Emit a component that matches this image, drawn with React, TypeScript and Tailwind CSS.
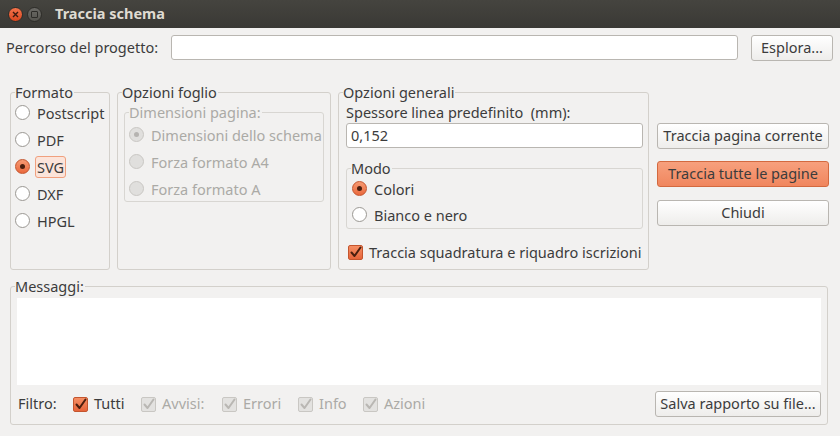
import React from "react";

const txt = "text-[#3c3c3c]";

function Radio({ label, checked = false, disabled = false, focus = false, dot = false }: { label: string; checked?: boolean; disabled?: boolean; focus?: boolean; dot?: boolean }) {
  let circle = "border-[#9b9893] bg-white";
  if (checked) circle = "border-[#c4552e] bg-gradient-to-b from-[#f79a72] to-[#e9683c]";
  if (disabled) circle = "border-[#c9c7c3] bg-[#e0dfdd]";
  return (
    <div className="flex items-center h-[27px]">
      <div className={`w-[15px] h-[15px] rounded-full border flex items-center justify-center shrink-0 ${circle}`}>
        {checked && <div className="w-[5px] h-[5px] rounded-full bg-[#4a1e0e]" />}
        {dot && <div className="w-[5px] h-[5px] rounded-full bg-[#b5b3b0]" />}
      </div>
      <span
        className={`ml-[5px] px-[1px] leading-[20px] rounded-[3px] border whitespace-nowrap ${focus ? "border-[#f0a07e] bg-[#fbe4da]" : "border-transparent"} ${disabled ? "text-[#abaaa6]" : txt}`}
      >
        {label}
      </span>
    </div>
  );
}

function Check({ checked = true, disabled = false }: { checked?: boolean; disabled?: boolean }) {
  const box = disabled ? "border-[#c9c7c3] bg-[#e3e2e0]" : "border-[#c4552e] bg-gradient-to-b from-[#f58f64] to-[#e6643a]";
  const stroke = disabled ? "#b9b7b3" : "#4a1e0e";
  return (
    <div className={`w-[15px] h-[15px] rounded-[2px] border shrink-0 flex items-center justify-center ${box}`}>
      {checked && (
        <svg width="13" height="13" viewBox="0 0 13 13">
          <path d="M2.5 6.5 L5.5 10 L11.5 1.5" fill="none" stroke={stroke} strokeWidth="2" strokeLinecap="round" strokeLinejoin="round" />
        </svg>
      )}
    </div>
  );
}

function Button({ label, primary = false, className = "" }: { label: string; primary?: boolean; className?: string }) {
  const cls = primary
    ? "border-[#d3693f] bg-gradient-to-b from-[#f7a07d] to-[#f0865e]"
    : "border-[#b9b6b1] bg-gradient-to-b from-[#ffffff] to-[#eeedeb]";
  return (
    <div className={`flex items-center justify-center rounded-[3px] border whitespace-nowrap ${cls} ${txt} ${className}`}>{label}</div>
  );
}

function Group({ title, className = "", legendClass = "", children }: { title: string; className?: string; legendClass?: string; children: React.ReactNode }) {
  return (
    <fieldset className={`min-w-0 shrink-0 border border-[#d3d0cb] rounded-[3px] ${className}`}>
      <legend className={`pr-[1px] leading-[16px] h-[16px] ${txt} ${legendClass}`}>{title}</legend>
      {children}
    </fieldset>
  );
}

function FilterItem({ label, disabled = false, w }: { label: string; disabled?: boolean; w: string }) {
  return (
    <div className={`flex items-center shrink-0 ${w}`}>
      <Check disabled={disabled} />
      <span className={`ml-[6px] ${disabled ? "text-[#abaaa6]" : txt}`}>{label}</span>
    </div>
  );
}

export default function App() {
  return (
    <div
      className="w-[840px] h-[436px] bg-[#f2f1f0] flex flex-col overflow-hidden text-[14.5px]"
      style={{ fontFamily: '"Noto Sans", "Open Sans", sans-serif' }}
    >
      {/* Title bar */}
      <div className="h-[28px] shrink-0 flex items-center bg-gradient-to-b from-[#45443f] to-[#3a3935] pl-[8px]">
        <div className="w-[15px] h-[15px] rounded-full bg-gradient-to-b from-[#f4734a] to-[#d9461d] flex items-center justify-center border border-[#2e2d29]">
          <svg width="7" height="7" viewBox="0 0 7 7">
            <path d="M1 1 L6 6 M6 1 L1 6" stroke="#3a1a10" strokeWidth="1.4" />
          </svg>
        </div>
        <div className="ml-[4px] w-[15px] h-[15px] rounded-full bg-gradient-to-b from-[#6b6a66] to-[#55544f] flex items-center justify-center border border-[#2e2d29]">
          <div className="w-[7px] h-[7px] border border-[#2d2c29] rounded-[1px]" />
        </div>
        <span className="ml-[13px] font-bold text-[#dfdbd2] text-[14.5px]">Traccia schema</span>
      </div>

      {/* Path row */}
      <div className="flex items-center mt-[6px] ml-[6px] h-[27px]">
        <span className={txt}>Percorso del progetto:</span>
        <div className="ml-auto w-[567px] h-[25px] bg-white border border-[#b9b6b1] rounded-[3px]" />
        <Button label="Esplora..." className="ml-[13px] mr-[7px] w-[82px] h-[26px]" />
      </div>

      {/* Groups row */}
      <div className="flex mt-[23px] ml-[10px] h-[187px]">
        <Group title="Formato" className="w-[100px] h-[186px] pl-[4px]" legendClass="ml-0">
          <div className="mt-[-1px]">
            <Radio label="Postscript" />
            <Radio label="PDF" />
            <Radio label="SVG" checked focus />
            <Radio label="DXF" />
            <Radio label="HPGL" />
          </div>
        </Group>
        <Group title="Opzioni foglio" className="ml-[7px] w-[214px] h-[186px] px-[6px]" legendClass="-ml-[2px]">
          <fieldset className="min-w-0 mt-[4px] border border-[#d8d6d2] rounded-[3px] h-[98px] pl-[4px]">
            <legend className="pr-[1px] leading-[16px] h-[16px] text-[#abaaa6]">Dimensioni pagina:</legend>
            <div className="mt-[1px]">
              <Radio label="Dimensioni dello schema" disabled dot />
              <Radio label="Forza formato A4" disabled />
              <Radio label="Forza formato A" disabled />
            </div>
          </fieldset>
        </Group>
        <Group title="Opzioni generali" className="ml-[7px] w-[311px] h-[186px] px-[7px]" legendClass="-ml-[3px]">
          <div className={`${txt} leading-[18px] mt-[3px] whitespace-nowrap`}>Spessore linea predefinito&nbsp; (mm):</div>
          <div className={`mt-[2px] h-[25px] w-[297px] bg-white border border-[#b9b6b1] rounded-[3px] flex items-center pl-[4px] ${txt}`}>0,152</div>
          <fieldset className="min-w-0 mt-[12px] border border-[#d8d6d2] rounded-[3px] h-[69px] pl-[5px] w-[297px]">
            <legend className={`-ml-[1px] pr-[1px] leading-[16px] h-[16px] ${txt}`}>Modo</legend>
            <div className="mt-[-1px]">
              <Radio label="Colori" checked />
              <div className="mt-[-1px]">
                <Radio label="Bianco e nero" />
              </div>
            </div>
          </fieldset>
          <div className="flex items-center mt-[13px] ml-[2px]">
            <Check />
            <span className={`ml-[6px] ${txt} whitespace-nowrap`}>Traccia squadratura e riquadro iscrizioni</span>
          </div>
        </Group>
        <div className="ml-[8px] w-[172px] shrink-0 flex flex-col pt-[39px]">
          <Button label="Traccia pagina corrente" className="h-[26px]" />
          <Button label="Traccia tutte le pagine" primary className="h-[26px] mt-[12px]" />
          <Button label="Chiudi" className="h-[26px] mt-[13px]" />
        </div>
      </div>

      {/* Messages */}
      <Group title="Messaggi:" className="mt-[7px] ml-[10px] w-[818px] h-[147px] px-[6px]" legendClass="-ml-[2px]">
        <div className="mt-[4px] h-[87px] bg-white" />
        <div className="flex items-center mt-[6px] h-[26px]">
          <span className={`${txt} ml-[1px] w-[55px] shrink-0`}>Filtro:</span>
          <FilterItem label="Tutti" w="w-[68px]" />
          <FilterItem label="Avvisi:" disabled w="w-[81px]" />
          <FilterItem label="Errori" disabled w="w-[76px]" />
          <FilterItem label="Info" disabled w="w-[65px]" />
          <FilterItem label="Azioni" disabled w="w-[70px]" />
          <Button label="Salva rapporto su file..." className="ml-auto w-[166px] h-[26px]" />
        </div>
      </Group>
    </div>
  );
}
